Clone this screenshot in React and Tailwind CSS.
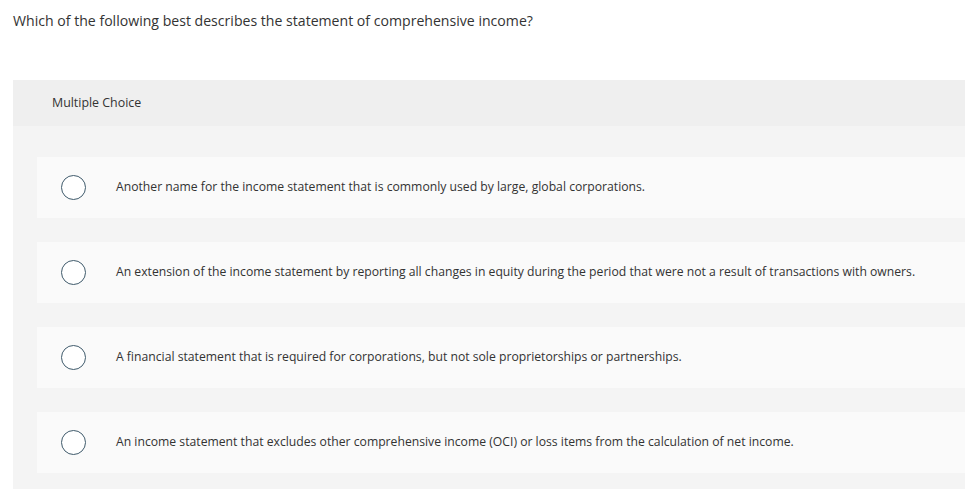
const options = [
  'Another name for the income statement that is commonly used by large, global corporations.',
  'An extension of the income statement by reporting all changes in equity during the period that were not a result of transactions with owners.',
  'A financial statement that is required for corporations, but not sole proprietorships or partnerships.',
  'An income statement that excludes other comprehensive income (OCI) or loss items from the calculation of net income.',
]

export default function App() {
  return (
    <div className="min-h-screen bg-white text-[#333] font-['Open_Sans',sans-serif]">
      <div className="h-[80px] pl-[13px] pt-[12px]">
        <p className="text-[14.1px] leading-[18px] text-[#333]">
          Which of the following best describes the statement of comprehensive income?
        </p>
      </div>
      <div className="ml-[13px] bg-[#f4f4f4] h-[409px]">
        <div className="h-[46px] bg-[#efefef] pl-[39px] flex items-center">
          <span className="text-[12.4px] text-[#333]">Multiple Choice</span>
        </div>
        <div className="pt-[31px] pl-[24px] flex flex-col gap-[24px]">
          {options.map((text, i) => (
            <label key={i} className="h-[61px] bg-[#fafafa] flex items-center cursor-pointer">
              <span className="ml-[24px] w-[25px] h-[25px] rounded-full border-[1.5px] border-[#3f5a6b] bg-white shrink-0" />
              <span className="ml-[30px] text-[12.2px] text-[#333]">{text}</span>
            </label>
          ))}
        </div>
      </div>
    </div>
  )
}
